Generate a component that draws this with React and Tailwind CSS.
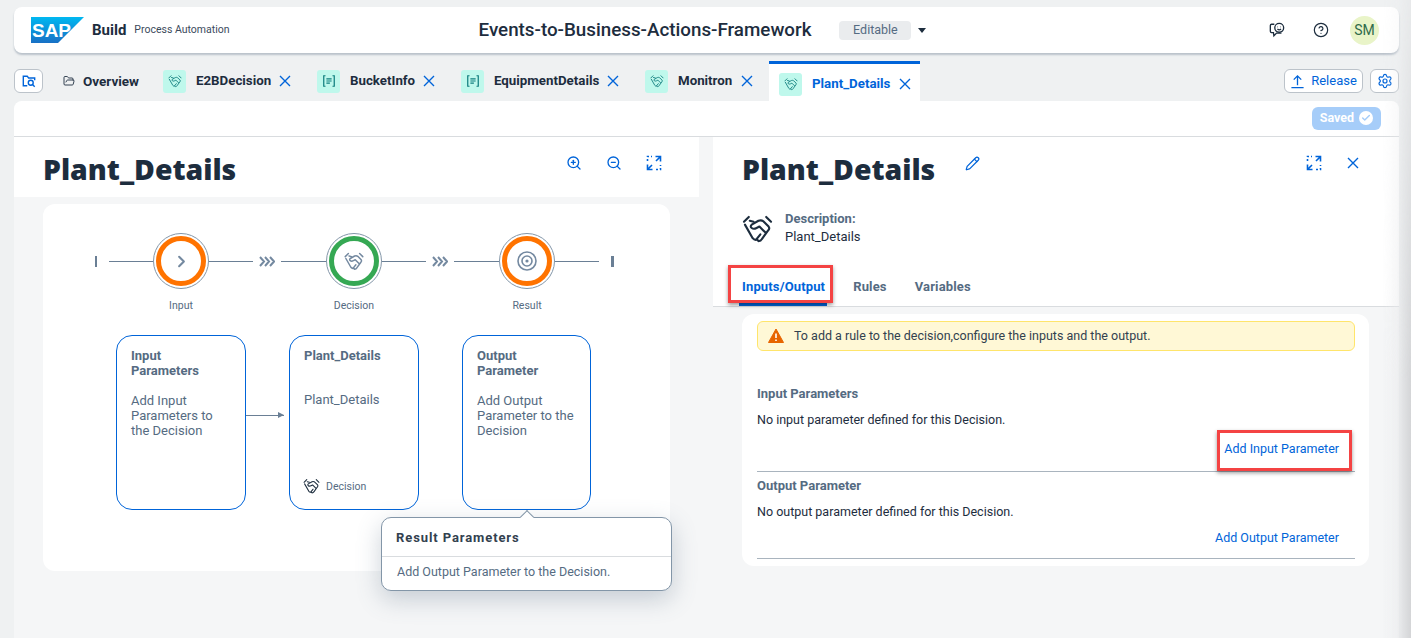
import React from 'react';
import { Settings, CircleHelp, ZoomIn, ZoomOut, Pencil, Check, ChevronRight, FolderOpen } from 'lucide-react';

const font = { fontFamily: 'Roboto, sans-serif' };

const Shake = ({ className = '', color = 'currentColor', sw = 2 }) => (
  <svg viewBox="0 0 32 30" fill="none" stroke={color} strokeWidth={sw} strokeLinejoin="round" strokeLinecap="round" className={className}>
    <path d="M2 8 L7 3" />
    <path d="M25 3 L30 8" />
    <path d="M3 11 L11 25 Q13 27.5 15.5 26.5 L17 28 Q19.5 28 20.5 26 L27 17 Q29 15 27.5 13 L22 7.5 Q20 6 17 7 L10 11 Q8 13 10 14.5 Q12 16 15 14.5 L18 13 L24 19" />
    <path d="M15 26 L19 21 M12 8 L8 7" />
  </svg>
);

const Rule = () => (
  <svg viewBox="0 0 16 16" fill="none" stroke="#0f7d7d" strokeWidth="1.4" className="w-[14px] h-[14px]">
    <path d="M4 2 H2 V14 H4 M12 2 H14 V14 H12" />
    <path d="M5 5.5 H11 M5 8 H11 M5 10.5 H9" />
  </svg>
);

const Close = ({ className = '' }) => (
  <svg viewBox="0 0 12 12" fill="none" stroke="#0064d9" strokeWidth="1.4" className={`w-[12px] h-[12px] ${className}`}>
    <path d="M1 1 L11 11 M11 1 L1 11" />
  </svg>
);

const Expand = () => (
  <svg viewBox="0 0 16 16" fill="none" stroke="#0064d9" strokeWidth="1.6" className="w-4 h-4">
    <path d="M9.5 1.5 H14.5 V6.5 M14.5 1.5 L10 6 M6.5 14.5 H1.5 V9.5 M1.5 14.5 L6 10" />
    <path d="M1.5 6 V1.5 H6 M10 14.5 H14.5 V10" strokeDasharray="2 2" />
  </svg>
);

const Chevrons = () => (
  <svg viewBox="0 0 16 11" fill="none" stroke="#7489a0" strokeWidth="2" className="w-[16px] h-[11px] ml-[6px] mr-[6px]">
    <path d="M1 1 L5 5.5 L1 10 M6 1 L10 5.5 L6 10 M11 1 L15 5.5 L11 10" />
  </svg>
);

const Tab = ({ type, label, width }) => (
  <div className={`flex items-center h-[24px] mt-[8px] ${width}`}>
    <div className="w-[23px] h-[23px] rounded-[3px] bg-[#bff8ec] flex items-center justify-center">
      {type === 'rule' ? <Rule /> : <Shake className="w-[14px] h-[14px]" color="#0f7d7d" />}
    </div>
    <span className="ml-[10px] text-[13.3px] font-bold whitespace-nowrap text-[#1d2d3e]">{label}</span>
    <Close className="ml-auto" />
  </div>
);

const Step = ({ label, ring, children }) => (
  <div className="relative w-[56px] h-[56px] rounded-full border border-[#8396a8] flex items-center justify-center shrink-0 bg-white">
    <div className={`w-[50px] h-[50px] rounded-full border-[5px] ${ring} flex items-center justify-center`}>{children}</div>
    <span className="absolute top-[64px] left-1/2 -translate-x-1/2 text-[10.5px] text-[#556b82]">{label}</span>
  </div>
);

const Card = ({ title, body, gap = 'mt-[15px]', width = 'w-[130px]', children }) => (
  <div className={`relative ${width} h-[175px] border border-[#0064d9] rounded-[16px] pl-[14px] pr-[16px] pt-[12px] text-[13px] leading-[15px] text-[#556b82] bg-white`}>
    <div className="font-bold">{title}</div>
    <div className={gap}>{body}</div>
    {children}
  </div>
);

export default function App() {
  return (
    <div style={font} className="relative w-[1411px] h-[638px] overflow-hidden bg-[#eff1f2] text-[#1d2d3e]">
      {/* shell bar */}
      <div className="ml-[14px] w-[1385px] mt-[7px] h-[46px] bg-white rounded-[8px] shadow-[0_2px_2px_rgba(85,107,130,0.35)] flex items-center pl-[17px] pr-[20px]">
        <svg viewBox="0 0 53 26" className="w-[53px] h-[26px]">
          <defs>
            <linearGradient id="sap" x1="0" y1="0" x2="0" y2="1">
              <stop offset="0" stopColor="#00b8f1" />
              <stop offset="1" stopColor="#1870c5" />
            </linearGradient>
          </defs>
          <polygon points="0,0 53,0 27,26 0,26" fill="url(#sap)" />
          <text x="1" y="20" fontSize="19" fontWeight="800" fill="#fff" fontFamily="Liberation Sans, sans-serif" textLength="39" lengthAdjust="spacingAndGlyphs">SAP</text>
        </svg>
        <span className="ml-[8px] text-[15px] font-bold">Build</span>
        <span className="ml-[8px] text-[10.5px] text-[#3b4a5c]">Process Automation</span>
        <span className="ml-[249px] text-[18.8px] font-medium whitespace-nowrap">Events-to-Business-Actions-Framework</span>
        <span className="ml-[28px] w-[72px] h-[19px] rounded-[4px] bg-[#eaecee] text-[#556b82] text-[12.5px] flex items-center justify-center">Editable</span>
        <span className="ml-[7px] w-0 h-0 border-x-[4px] border-x-transparent border-t-[5px] border-t-[#1d2d3e]" />
        <div className="ml-auto flex items-center">
          <svg viewBox="0 0 18 18" fill="none" stroke="#1d2d3e" strokeWidth="1.5" className="w-[16px] h-[16px]">
            <path d="M6 2.5 H3 Q1.5 2.5 1.5 4 V10.5 Q1.5 12 3 12 H5 L5.5 15.5 L8.5 12.5 H14" />
            <circle cx="11.5" cy="6.5" r="5" />
            <path d="M9.5 5.5 H10 M13 5.5 H13.5 M9.5 8 Q11.5 9.8 13.5 8" />
          </svg>
          <CircleHelp size={16} strokeWidth={1.8} className="ml-[28px]" />
          <div className="ml-[21px] w-[29px] h-[29px] rounded-full bg-[#e9f4c8] text-[#2f6b4a] text-[14px] flex items-center justify-center">SM</div>
        </div>
      </div>

      {/* tab strip */}
      <div className="h-[40px] mt-[8px] ml-[14px] w-[1385px] flex items-start">
        <div className="mt-[8px] w-[29px] h-[24px] rounded-[6px] border border-[#bcc3ca] bg-white flex items-center justify-center">
          <svg viewBox="0 0 16 16" fill="none" stroke="#0064d9" strokeWidth="1.6" className="w-[14px] h-[14px]">
            <path d="M6 13.5 H1.5 V2.5 H6 L7.5 4.5 H14.5 V7" />
            <circle cx="10" cy="10" r="2.8" />
            <path d="M12 12 L14.5 14.5" />
          </svg>
        </div>
        <div className="flex items-center h-[24px] mt-[8px] ml-[20px] w-[100px]">
          <FolderOpen size={12} strokeWidth={1.8} />
          <span className="ml-[8px] text-[13.5px] font-bold">Overview</span>
        </div>
        <div className="flex gap-[26px]">
          <Tab label="E2BDecision" width="w-[128px]" />
          <Tab type="rule" label="BucketInfo" width="w-[118px]" />
          <Tab type="rule" label="EquipmentDetails" width="w-[158px]" />
          <Tab label="Monitron" width="w-[108px]" />
        </div>
        <div className="flex items-center h-[40px] w-[151px] ml-[16px] pl-[10px] pr-[9px] bg-white border-t-[3px] border-[#0064d9] pt-[3px]">
          <div className="w-[23px] h-[23px] rounded-[3px] bg-[#bff8ec] flex items-center justify-center">
            <Shake className="w-[14px] h-[14px]" color="#0f7d7d" />
          </div>
          <span className="ml-[10px] text-[13.3px] font-bold whitespace-nowrap text-[#0064d9]">Plant_Details</span>
          <Close className="ml-auto" />
        </div>
        <div className="ml-auto mt-[8px] flex gap-[7px]">
          <div className="w-[79px] h-[24px] rounded-[6px] border border-[#bcc3ca] bg-white flex items-center justify-center gap-[6px] text-[#0064d9] text-[13px]">
            <svg viewBox="0 0 16 16" fill="none" stroke="#0064d9" strokeWidth="1.4" className="w-[15px] h-[15px]">
              <path d="M8 12 V2.5 M4 6 L8 2 L12 6 M1.5 14.5 H14.5" />
            </svg>
            Release
          </div>
          <div className="w-[29px] h-[24px] rounded-[6px] border border-[#bcc3ca] bg-white flex items-center justify-center">
            <Settings size={16} strokeWidth={1.8} className="text-[#0064d9]" />
          </div>
        </div>
      </div>

      {/* main */}
      <div className="ml-[14px] w-[1385px] h-[537px] bg-[#f5f6f7] rounded-t-[8px] overflow-hidden">
        <div className="h-[36px] bg-white border-b border-[#d9dcdf] flex justify-end items-start pt-[6px] pr-[18px]">
          <div className="w-[69px] h-[23px] rounded-[6px] bg-[#a6cdf9] text-white text-[12.5px] font-bold flex items-center justify-center gap-[5px] pb-[1px]">
            Saved
            <span className="w-[14px] h-[14px] rounded-full bg-white flex items-center justify-center">
              <Check size={10} strokeWidth={3.5} className="text-[#a6cdf9]" />
            </span>
          </div>
        </div>

        <div className="flex">
          {/* left column */}
          <div className="w-[685px] relative">
            <div className="h-[60px] bg-white flex items-start pl-[29px] pr-[37px]">
              <h1 className="font-['Noto_Sans'] text-[28.4px] leading-[38px] mt-[13px] font-black text-[#1d2d3e]">Plant_Details</h1>
              <div className="ml-auto mt-[18px] flex gap-[24px] text-[#0064d9]">
                <ZoomIn size={16} strokeWidth={2} />
                <ZoomOut size={16} strokeWidth={2} />
                <Expand />
              </div>
            </div>
            <div className="ml-[29px] mt-[7px] w-[627px] h-[367px] bg-white rounded-[12px] pt-[29px]">
              <div className="flex items-center pl-[52px] text-[#76889b]">
                <span className="w-[2px] h-[11px] bg-[#6a7f95]" />
                <span className="ml-[12px] w-[44px] h-px bg-[#6a7f95]" />
                <Step label="Input" ring="border-[#ff7300]"><ChevronRight size={19} strokeWidth={2.6} className="text-[#7489a0]" /></Step>
                <span className="w-[44px] h-px bg-[#6a7f95]" />
                <Chevrons />
                <span className="w-[45px] h-px bg-[#6a7f95]" />
                <Step label="Decision" ring="border-[#35a853]"><Shake className="w-[20px] h-[20px]" color="#7489a0" sw={2.4} /></Step>
                <span className="w-[44px] h-px bg-[#6a7f95]" />
                <Chevrons />
                <span className="w-[45px] h-px bg-[#6a7f95]" />
                <Step label="Result" ring="border-[#ff7300]">
                  <svg viewBox="0 0 20 20" fill="none" stroke="#7489a0" strokeWidth="1.6" className="w-[20px] h-[20px]">
                    <circle cx="10" cy="10" r="9" /><circle cx="10" cy="10" r="5" /><circle cx="10" cy="10" r="1.6" fill="#7489a0" stroke="none" />
                  </svg>
                </Step>
                <span className="w-[44px] h-px bg-[#6a7f95]" />
                <span className="ml-[12px] w-[3px] h-[11px] bg-[#6a7f95]" />
              </div>
              <div className="relative flex gap-[43px] pl-[73px] mt-[46px]">
                <Card title="Input Parameters" body="Add Input Parameters to the Decision" />
                <Card title="Plant_Details" body="Plant_Details" gap="mt-[29px]">
                  <div className="absolute left-[13px] bottom-[15px] flex items-center gap-[6px] text-[10.5px]">
                    <Shake className="w-[17px] h-[16px]" color="#1d2d3e" />
                    Decision
                  </div>
                </Card>
                <Card title="Output Parameter" body="Add Output Parameter to the Decision" width="w-[129px]" />
                {/* connector */}
                <div className="absolute left-[203px] top-[80px] w-[38px] h-px bg-[#6a7f95]" />
                <div className="absolute left-[235px] top-[77px] w-0 h-0 border-y-[3px] border-y-transparent border-l-[6px] border-l-[#6a7f95]" />
              </div>
            </div>
            {/* popover */}
            <div className="absolute left-[367px] top-[380px] w-[291px] h-[74px] bg-white border border-[#8396a8] rounded-[10px] shadow-[0_8px_24px_rgba(85,107,130,0.3)]">
              <div className="absolute -top-[6px] left-[140px] w-[10px] h-[10px] rotate-45 bg-white border-l border-t border-[#8396a8]" />
              <div className="h-[39px] px-[14px] pt-[1px] flex items-center border-b border-[#d9dcdf] text-[13px] font-bold tracking-[0.9px] text-[#32414f]">Result Parameters</div>
              <div className="px-[15px] pt-[6px] text-[12.5px] text-[#556b82]">Add Output Parameter to the Decision.</div>
            </div>
          </div>

          {/* right column */}
          <div className="ml-[14px] w-[686px]">
            <div className="h-[170px] bg-white border-b border-[#d9dcdf] pl-[29px] pr-[40px]">
              <div className="flex items-start">
                <h1 className="font-['Noto_Sans'] text-[28.4px] leading-[38px] mt-[13px] font-black text-[#1d2d3e]">Plant_Details</h1>
                <Pencil size={15} strokeWidth={2} className="ml-[30px] mt-[19px] text-[#0064d9]" />
                <div className="ml-auto mt-[18px] flex items-center gap-[25px]">
                  <Expand />
                  <Close />
                </div>
              </div>
              <div className="flex items-center mt-[22px]">
                <Shake className="w-[31px] h-[29px]" color="#1d2d3e" sw={2.2} />
                <div className="ml-[12px] text-[13px] leading-[18px]">
                  <div className="font-bold text-[#556b82]">Description:</div>
                  <div>Plant_Details</div>
                </div>
              </div>
              <div className="flex mt-[31px] text-[13px] font-bold tracking-[0.15px] text-[#556b82] gap-[28px]">
                <div className="relative text-[#0064d9]">
                  Inputs/Output
                  <span className="absolute -left-[3px] -right-[2px] top-[26px] h-[3px] bg-[#0064d9]" />
                  <span className="absolute -left-[14px] -right-[8px] -top-[12px] h-[38px] border-[3px] border-[#f44343] shadow-[0_2px_4px_rgba(0,0,0,0.4)]" />
                </div>
                <div>Rules</div>
                <div>Variables</div>
              </div>
            </div>
            <div className="ml-[29px] mt-[7px] w-[627px] h-[252px] bg-white rounded-[12px] pl-[15px] pr-[14px] pt-[7px] text-[12.5px]">
              <div className="h-[30px] rounded-[6px] bg-[#fff8d6] border border-[#ffe56b] flex items-center pl-[10px]">
                <svg viewBox="0 0 16 16" className="w-[16px] h-[16px]">
                  <path d="M8 1 L15.5 14.5 H0.5 Z" fill="#e76500" stroke="#e76500" strokeLinejoin="round" />
                  <path d="M8 5.5 V10 M8 11.6 V13" stroke="#fff" strokeWidth="1.6" />
                </svg>
                <span className="ml-[10px] text-[#32414f]">To add a rule to the decision,configure the inputs and the output.</span>
              </div>
              <div className="mt-[34px] text-[13px] font-bold text-[#556b82] leading-[18px]">Input Parameters</div>
              <div className="mt-[8px] leading-[18px]">No input parameter defined for this Decision.</div>
              <div className="mt-[11px] pr-[16px] text-right text-[#0064d9] leading-[18px]">
                <span className="relative">
                  Add Input Parameter
                  <span className="absolute -left-[7px] -right-[13px] -top-[11px] h-[41px] border-[3px] border-[#f44343] shadow-[0_2px_4px_rgba(0,0,0,0.4)]" />
                </span>
              </div>
              <div className="mt-[13px] border-t border-[#a9b4be]" />
              <div className="mt-[5px] text-[13px] font-bold text-[#556b82] leading-[18px]">Output Parameter</div>
              <div className="mt-[8px] leading-[18px]">No output parameter defined for this Decision.</div>
              <div className="mt-[8px] pr-[16px] text-right text-[#0064d9] leading-[18px]">Add Output Parameter</div>
              <div className="mt-[11px] border-t border-[#a9b4be]" />
            </div>
          </div>
        </div>
      </div>
      {/* page edge shade */}
      <div className="absolute right-0 top-0 bottom-0 w-[28px] pointer-events-none bg-gradient-to-r from-transparent via-[#e9eaec]/50 to-[#d3d4d6] [mask-image:linear-gradient(to_bottom,rgba(0,0,0,0.25),black_60%)]" />
    </div>
  );
}
